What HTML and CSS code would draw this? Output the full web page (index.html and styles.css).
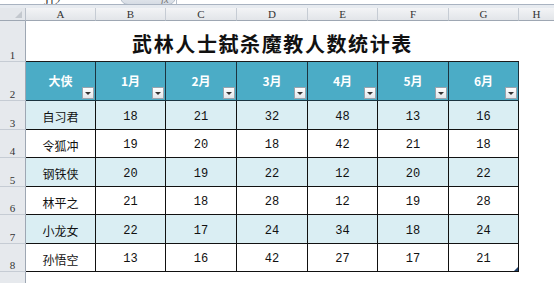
FILE: index.html
```html
<!DOCTYPE html>
<html lang="zh-CN">
<head>
<meta charset="utf-8">
<title>武林人士弑杀魔教人数统计表</title>
<link rel="stylesheet" href="styles.css">
</head>
<body>
<div class="topbar">
  <div class="namebox"><span>J12</span></div>
  <div class="fxbox"><span class="fx">fx</span></div>
  <div class="formula"></div>
</div>
<div class="strip"></div>
<div class="sheet">
  <div class="corner"><span class="tri"></span></div>
  <div class="colhdr">A</div><div class="colhdr">B</div><div class="colhdr">C</div><div class="colhdr">D</div><div class="colhdr">E</div><div class="colhdr">F</div><div class="colhdr">G</div><div class="colhdr last">H</div>

  <div class="rowhdr">1</div>
  <div class="title">武林人士弑杀魔教人数统计表</div>
  <div class="cell"></div>

  <div class="rowhdr">2</div>
  <div class="th">大侠<span class="filter"></span></div>
  <div class="th">1月<span class="filter"></span></div>
  <div class="th">2月<span class="filter"></span></div>
  <div class="th">3月<span class="filter"></span></div>
  <div class="th">4月<span class="filter"></span></div>
  <div class="th">5月<span class="filter"></span></div>
  <div class="th">6月<span class="filter"></span></div>
  <div class="cell"></div>

  <div class="rowhdr">3</div>
  <div class="td band name">自习君</div><div class="td band">18</div><div class="td band">21</div><div class="td band">32</div><div class="td band">48</div><div class="td band">13</div><div class="td band">16</div>
  <div class="cell"></div>

  <div class="rowhdr">4</div>
  <div class="td name">令狐冲</div><div class="td">19</div><div class="td">20</div><div class="td">18</div><div class="td">42</div><div class="td">21</div><div class="td">18</div>
  <div class="cell"></div>

  <div class="rowhdr">5</div>
  <div class="td band name">钢铁侠</div><div class="td band">20</div><div class="td band">19</div><div class="td band">22</div><div class="td band">12</div><div class="td band">20</div><div class="td band">22</div>
  <div class="cell"></div>

  <div class="rowhdr">6</div>
  <div class="td name">林平之</div><div class="td">21</div><div class="td">18</div><div class="td">28</div><div class="td">12</div><div class="td">19</div><div class="td">28</div>
  <div class="cell"></div>

  <div class="rowhdr">7</div>
  <div class="td band name">小龙女</div><div class="td band">22</div><div class="td band">17</div><div class="td band">24</div><div class="td band">34</div><div class="td band">18</div><div class="td band">24</div>
  <div class="cell"></div>

  <div class="rowhdr">8</div>
  <div class="td name">孙悟空</div><div class="td">13</div><div class="td">16</div><div class="td">42</div><div class="td">27</div><div class="td">17</div><div class="td end">21<span class="handle"></span></div>
  <div class="cell"></div>

  <div class="rowhdr"></div>
  <div class="cell"></div><div class="cell"></div><div class="cell"></div><div class="cell"></div><div class="cell"></div><div class="cell"></div><div class="cell"></div><div class="cell"></div>
</div>
</body>
</html>
```

FILE: styles.css
```css
* { box-sizing: border-box; }
html, body { margin: 0; padding: 0; background: #fff; }
body {
  width: 554px;
  height: 283px;
  overflow: hidden;
  font-family: "Noto Sans CJK SC", "Liberation Sans", sans-serif;
}

.topbar {
  height: 5px;
  display: flex;
  overflow: hidden;
  border-bottom: 1px solid #a9b3c1;
  background: #fff;
}
.namebox {
  width: 120px;
  display: flex;
  align-items: flex-end;
  padding-left: 44px;
  font-family: "Liberation Serif", serif;
  font-size: 12px;
  line-height: 12px;
  color: #333;
}
.namebox span { display: block; margin-bottom: -3px; }
.fxbox {
  width: 56px;
  height: 12px;
  margin-top: -7px;
  background: linear-gradient(#e9edf2, #d6dce4);
  border: 1px solid #b6bfcb;
  border-radius: 0 0 8px 8px;
  display: flex;
  justify-content: flex-end;
  padding-right: 6px;
}
.fx { font-family: "Liberation Serif", serif; font-style: italic; font-size: 11px; line-height: 11px; color: #777; }
.formula { flex: 1; border-left: 1px solid #b6bfcb; }

.strip { height: 3px; background: #e7ebf0; }

.sheet {
  display: grid;
  grid-template-columns: 26px 70px 70px 71px 71px 70px 71px 70px 35px;
  grid-template-rows: 13px 41px 39px 29px 28px 29px 28px 29px 28px 20px;
}

.corner {
  background: #e4e7eb;
  border-right: 1px solid #b9c0c9;
  border-bottom: 1px solid #9ea7b3;
  position: relative;
}
.tri {
  position: absolute;
  right: 3px;
  bottom: 2px;
  width: 0; height: 0;
  border-left: 7px solid transparent;
  border-bottom: 7px solid #c3c8ce;
}
.colhdr {
  background: linear-gradient(#f3f4f6, #e2e5e9);
  border-right: 1px solid #c6ccd4;
  border-bottom: 1px solid #9ea7b3;
  font-family: "Liberation Serif", serif;
  font-size: 11px;
  line-height: 12px;
  color: #333;
  text-align: center;
}
.colhdr.last { border-right: none; }

.rowhdr {
  background: #e6e9ed;
  border-right: 1px solid #9ea7b3;
  border-bottom: 1px solid #c6ccd4;
  font-family: "Liberation Serif", serif;
  font-size: 11px;
  color: #333;
  display: flex;
  align-items: flex-end;
  justify-content: center;
  line-height: 12px;
}

.cell { background: #fff; }

.title {
  grid-column: 2 / 9;
  border-bottom: 1px solid #1b1b1b;
  display: flex;
  align-items: center;
  justify-content: center;
  padding-top: 4px;
  font-family: "Noto Sans CJK SC", sans-serif;
  font-weight: 700;
  font-size: 20px;
  letter-spacing: 1.6px;
  color: #111;
}

.th {
  position: relative;
  background: #4bacc6;
  border-right: 1px solid #1c3440;
  border-bottom: 1px solid #1c3440;
  color: #fff;
  font-weight: 700;
  font-size: 12px;
  display: flex;
  align-items: center;
  justify-content: center;
  padding-bottom: 2px;
}
.filter {
  position: absolute;
  right: 1px;
  bottom: 1px;
  width: 12px;
  height: 12px;
  background: linear-gradient(#ffffff, #e3e6ea);
  border: 1px solid #9aa4ae;
}
.filter::after {
  content: "";
  position: absolute;
  left: 2px;
  top: 4px;
  border-left: 3px solid transparent;
  border-right: 3px solid transparent;
  border-top: 3px solid #333;
}

.td {
  position: relative;
  background: #fff;
  border-right: 1px solid #111;
  border-bottom: 1px solid #111;
  display: flex;
  align-items: center;
  justify-content: center;
  padding-top: 3px;
  font-family: "Liberation Mono", monospace;
  font-size: 12px;
  color: #111;
}
.td.band { background: #daeef3; }
.td.name { font-family: "Noto Sans CJK SC", sans-serif; font-size: 12px; }

.handle {
  position: absolute;
  right: 0;
  bottom: 0;
  width: 0; height: 0;
  border-left: 4px solid transparent;
  border-bottom: 4px solid #1f3f6a;
}
```
